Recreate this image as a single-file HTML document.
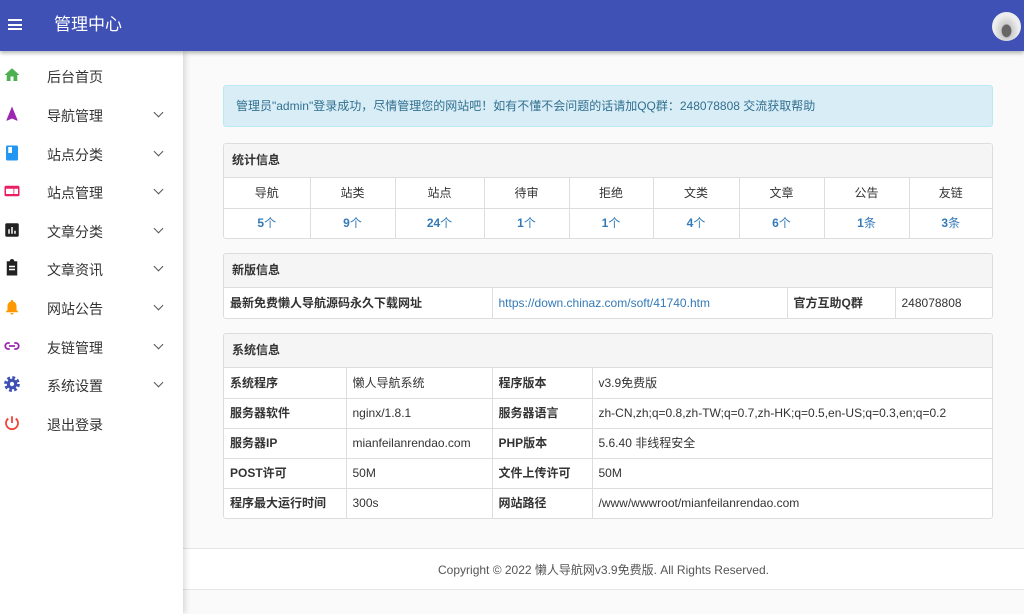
<!DOCTYPE html>
<html><head><meta charset="utf-8"><style>
*{margin:0;padding:0;box-sizing:border-box}
body{width:1024px;height:614px;overflow:hidden;background:#fafafa;font-family:"Liberation Sans","Noto Sans CJK SC",sans-serif;font-size:12px;line-height:14px;color:#333;position:relative}
.hdr{position:absolute;left:0;top:0;width:1024px;height:51px;background:#3f51b5;box-shadow:0 2px 4px rgba(0,0,0,.3);z-index:3}
.hdr .t{position:absolute;left:54px;top:15px;color:#fff;font-size:17px;line-height:20px}
.burger{position:absolute;left:8px;top:19px;width:14px;height:11px;border-top:2px solid #fff;border-bottom:2px solid #fff}
.burger:after{content:"";position:absolute;left:0;top:2.5px;width:14px;height:2px;background:#fff}
.av{position:absolute;left:992px;top:12px;width:29px;height:29px;border-radius:50%;background:radial-gradient(ellipse at 50% 65%,#666 0 22%,#ccc 26%,#eee 60%)}
.side{position:absolute;left:0;top:51px;width:183px;height:563px;background:#fff;box-shadow:2px 0 6px rgba(0,0,0,.15);z-index:2}
.it{position:absolute;left:0;height:38px;width:183px}
.it .l{position:absolute;left:47px;top:10px;font-size:14px;line-height:18px;color:#333}
.it .ic{position:absolute;left:3px;top:8px;width:18px;height:18px;display:block}
.it .ch{position:absolute;left:155px;top:12px;width:7px;height:7px;border-right:1.5px solid #555;border-bottom:1.5px solid #555;transform:rotate(45deg)}
.alert{position:absolute;left:223px;top:85px;width:770px;height:42px;background:#d9edf7;border:1px solid #bce8f1;border-radius:3px;color:#31708f;padding:13px 0 0 12px}
.pn{position:absolute;left:223px;width:770px;border:1px solid #ddd;border-radius:3px;background:#fff;overflow:hidden}
.ph{height:34px;background:#f5f5f5;border-bottom:1px solid #ddd;padding:9px 0 0 8px;font-weight:bold;color:#333}
table{border-collapse:collapse;width:100%;table-layout:fixed}
td{border:1px solid #ddd;height:30px;padding:0 6px;white-space:nowrap;overflow:hidden;vertical-align:middle;line-height:14px}
tr:first-child td{border-top:0}
tr td:first-child{border-left:0}
tr td:last-child{border-right:0}
tr:last-child td{border-bottom:0}
.c td{text-align:center}
.n td{color:#337ab7;font-weight:bold}
.n td span{font-weight:normal}
.b{font-weight:bold}
.ft{position:absolute;left:183px;top:548px;width:841px;height:42px;background:#fff;border-top:1px solid #e5e5e5;border-bottom:1px solid #e5e5e5;text-align:center;padding-top:14px;color:#555}
</style></head><body>
<div class="hdr"><div class="burger"></div><div class="t">管理中心</div><div class="av"></div></div>
<div class="side">
<div class="it" style="top:7px"><svg class="ic" viewBox="0 0 24 24"><path d="M10 20v-6h4v6h5v-8h3L12 3 2 12h3v8z" fill="#4caf50"/></svg><span class="l">后台首页</span></div>
<div class="it" style="top:46px"><svg class="ic" viewBox="0 0 24 24"><path d="M12 2L4.5 20.3l.7.7L12 18l6.8 3 .7-.7z" fill="#9c27b0"/></svg><span class="l">导航管理</span><i class="ch"></i></div>
<div class="it" style="top:85px"><svg class="ic" viewBox="0 0 24 24"><rect x="4" y="2" width="16" height="20" rx="2" fill="#2196f3"/><rect x="7" y="4" width="5" height="8" fill="#fff"/></svg><span class="l">站点分类</span><i class="ch"></i></div>
<div class="it" style="top:123px"><svg class="ic" viewBox="0 0 24 24"><rect x="2" y="5" width="20" height="14" rx="2" fill="#e91e63"/><rect x="4" y="9" width="10" height="7" fill="#fff"/><rect x="15" y="9" width="5" height="7" fill="#fff"/></svg><span class="l">站点管理</span><i class="ch"></i></div>
<div class="it" style="top:162px"><svg class="ic" viewBox="0 0 24 24"><rect x="3" y="3" width="18" height="18" rx="2" fill="#222"/><path d="M7 17h2v-6H7zm4 0h2V8h-2zm4 0h2v-4h-2z" fill="#fff"/></svg><span class="l">文章分类</span><i class="ch"></i></div>
<div class="it" style="top:200px"><svg class="ic" viewBox="0 0 24 24"><path d="M19 3h-4a3 3 0 0 0-6 0H5v19h14z" fill="#222"/><path d="M8 9h8v2H8zm0 4h8v2H8z" fill="#fff"/></svg><span class="l">文章资讯</span><i class="ch"></i></div>
<div class="it" style="top:239px"><svg class="ic" viewBox="0 0 24 24"><path d="M12 22a2 2 0 0 0 2-2h-4a2 2 0 0 0 2 2zm6-6v-5c0-3-1.6-5.6-4.5-6.3V4a1.5 1.5 0 0 0-3 0v.7C7.6 5.4 6 8 6 11v5l-2 2v1h16v-1z" fill="#ff9800"/></svg><span class="l">网站公告</span><i class="ch"></i></div>
<div class="it" style="top:278px"><svg class="ic" viewBox="0 0 24 24"><path d="M9 8H7a4 4 0 0 0 0 8h2m6-8h2a4 4 0 0 1 0 8h-2M8 12h8" stroke="#9c27b0" stroke-width="2.4" fill="none"/></svg><span class="l">友链管理</span><i class="ch"></i></div>
<div class="it" style="top:316px"><svg class="ic" viewBox="0 0 24 24"><circle cx="12" cy="12" r="8" fill="none" stroke="#3f51b5" stroke-width="5" stroke-dasharray="3.5 2.8"/><circle cx="12" cy="12" r="7" fill="#3f51b5"/><circle cx="12" cy="12" r="2.8" fill="#fff"/></svg><span class="l">系统设置</span><i class="ch"></i></div>
<div class="it" style="top:355px"><svg class="ic" viewBox="0 0 24 24"><path d="M12 3v9M7 6a8 8 0 1 0 10 0" stroke="#f44336" stroke-width="2.4" fill="none"/></svg><span class="l">退出登录</span></div>
</div>
<div class="alert">管理员"admin"登录成功，尽情管理您的网站吧！如有不懂不会问题的话请加QQ群：248078808 交流获取帮助</div>
<div class="pn" style="top:143px"><div class="ph">统计信息</div>
<table class="c"><colgroup><col style="width:86px"><col style="width:85px"><col style="width:89px"><col style="width:85px"><col style="width:84px"><col style="width:86px"><col style="width:85px"><col style="width:85px"><col></colgroup>
<tr><td>导航</td><td>站类</td><td>站点</td><td>待审</td><td>拒绝</td><td>文类</td><td>文章</td><td>公告</td><td>友链</td></tr>
<tr class="n"><td>5<span>个</span></td><td>9<span>个</span></td><td>24<span>个</span></td><td>1<span>个</span></td><td>1<span>个</span></td><td>4<span>个</span></td><td>6<span>个</span></td><td>1<span>条</span></td><td>3<span>条</span></td></tr></table></div>
<div class="pn" style="top:253px"><div class="ph">新版信息</div>
<table><colgroup><col style="width:268px"><col style="width:295px"><col style="width:108px"><col></colgroup>
<tr><td class="b">最新免费懒人导航源码永久下载网址</td><td style="color:#337ab7">https://down.chinaz.com/soft/41740.htm</td><td class="b">官方互助Q群</td><td>248078808</td></tr></table></div>
<div class="pn" style="top:333px"><div class="ph">系统信息</div>
<table><colgroup><col style="width:122px"><col style="width:146px"><col style="width:100px"><col></colgroup>
<tr><td class="b">系统程序</td><td>懒人导航系统</td><td class="b">程序版本</td><td>v3.9免费版</td></tr>
<tr><td class="b">服务器软件</td><td>nginx/1.8.1</td><td class="b">服务器语言</td><td>zh-CN,zh;q=0.8,zh-TW;q=0.7,zh-HK;q=0.5,en-US;q=0.3,en;q=0.2</td></tr>
<tr><td class="b">服务器IP</td><td>mianfeilanrendao.com</td><td class="b">PHP版本</td><td>5.6.40 非线程安全</td></tr>
<tr><td class="b">POST许可</td><td>50M</td><td class="b">文件上传许可</td><td>50M</td></tr>
<tr><td class="b">程序最大运行时间</td><td>300s</td><td class="b">网站路径</td><td>/www/wwwroot/mianfeilanrendao.com</td></tr></table></div>
<div class="ft">Copyright © 2022 懒人导航网v3.9免费版. All Rights Reserved.</div>
</body></html>
